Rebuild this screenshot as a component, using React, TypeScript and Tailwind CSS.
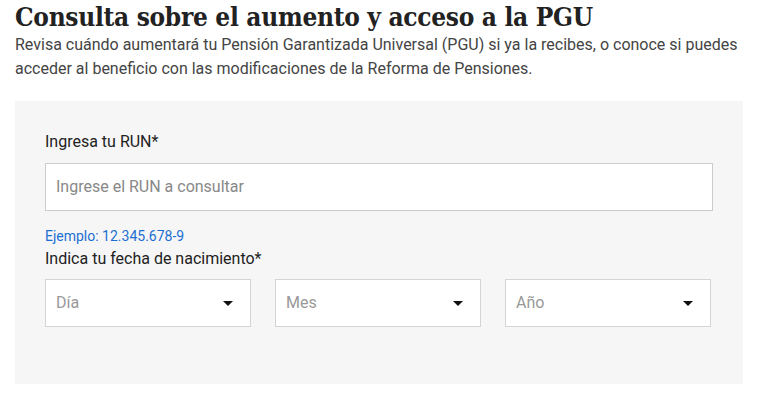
import React from "react";

function Caret() {
  return (
    <svg width="10" height="5" viewBox="0 0 10 5" className="shrink-0">
      <path d="M0 0 L10 0 L5 5 Z" fill="#111" />
    </svg>
  );
}

function SelectBox({ label }: { label: string }) {
  return (
    <div className="flex h-[48px] w-[206px] items-center justify-between border border-[#d4d4d4] bg-white pl-[10px] pr-[17px]">
      <span className="text-[16px] text-[#999]">{label}</span>
      <Caret />
    </div>
  );
}

export default function App() {
  return (
    <div className="min-h-[400px] bg-white px-[15px] pt-[1px] text-[#222]" style={{ fontFamily: "Roboto, 'Liberation Sans', sans-serif" }}>
      <h1
        className="text-[26px] font-bold leading-[32px] tracking-[-0.3px] text-[#222]"
        style={{ fontFamily: "'DejaVu Serif Condensed', 'DejaVu Serif', 'Liberation Serif', serif", fontStretch: "condensed" }}
      >
        Consulta sobre el aumento y acceso a la PGU
      </h1>
      <p className="mt-0 text-[16px] leading-[24px] text-[#444]">
        Revisa cuándo aumentará tu Pensión Garantizada Universal (PGU) si ya la recibes, o conoce si puedes acceder al beneficio con las modificaciones de la Reforma de Pensiones.
      </p>
      <div className="mt-[20px] w-[728px] bg-[#f6f6f6] pl-[30px] pr-[30px] pt-[31px] pb-[57px]">
        <label className="block text-[16px] leading-[20px] text-[#222]">Ingresa tu RUN*</label>
        <div className="mt-[11px] flex h-[48px] w-[668px] items-center border border-[#cccccc] bg-white px-[10px]">
          <span className="text-[16px] text-[#888]">Ingrese el RUN a consultar</span>
        </div>
        <div className="mt-[16px] text-[14px] leading-[18px] text-[#1b6fd1]">Ejemplo: 12.345.678-9</div>
        <div className="mt-[4px] text-[16px] leading-[20px] text-[#222]">Indica tu fecha de nacimiento*</div>
        <div className="mt-[10px] flex gap-[24px]">
          <SelectBox label="Día" />
          <SelectBox label="Mes" />
          <SelectBox label="Año" />
        </div>
      </div>
    </div>
  );
}
